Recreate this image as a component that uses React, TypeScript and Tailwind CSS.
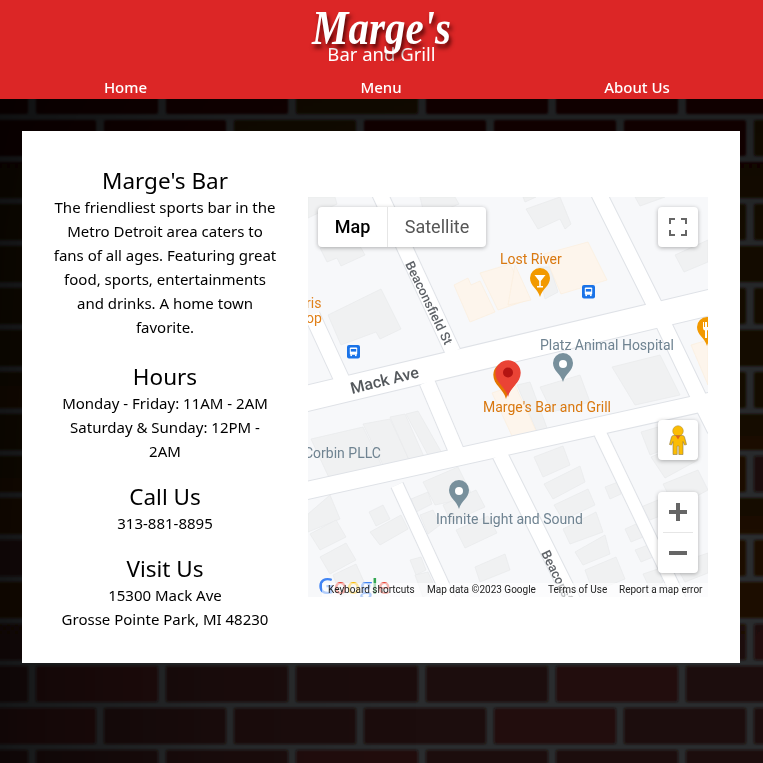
const rowsY = Array.from({ length: 17 }, (_, i) => 75 + 42 * i);

function BrickWall() {
  const bricks: { x: number; y: number; w: number; h: number; o: number }[] = [];
  rowsY.forEach((y, r) => {
    const offset = r % 2 === 0 ? 32 : 100;
    for (let i = -1; i < 7; i++) {
      const x = offset + i * 130 + 4;
      bricks.push({ x, y: y + 3, w: 122, h: 36, o: ((i * 7 + r * 3 + 10) % 4) * 0.03 });
    }
  });
  return (
    <svg className="absolute inset-0 w-full h-full" viewBox="0 0 763 763" preserveAspectRatio="none">
      <defs>
        <filter id="soft"><feGaussianBlur stdDeviation="1.2" /></filter>
        <linearGradient id="brickFill" gradientUnits="userSpaceOnUse" x1="0" y1="99" x2="0" y2="680">
          <stop offset="0" stopColor="#140705" />
          <stop offset="0.6" stopColor="#1b0b07" />
          <stop offset="1" stopColor="#210e08" />
        </linearGradient>
        <linearGradient id="horiz" x1="0" y1="0" x2="1" y2="0">
          <stop offset="0" stopColor="#000" stopOpacity="0.5" />
          <stop offset="0.03" stopColor="#000" stopOpacity="0.42" />
          <stop offset="0.3" stopColor="#000" stopOpacity="0.1" />
          <stop offset="0.55" stopColor="#000" stopOpacity="0" />
        </linearGradient>
        <linearGradient id="top" x1="0" y1="0" x2="0" y2="1">
          <stop offset="0.1" stopColor="#000" stopOpacity="0.3" />
          <stop offset="0.3" stopColor="#000" stopOpacity="0.12" />
          <stop offset="0.7" stopColor="#000" stopOpacity="0" />
        </linearGradient>
      </defs>
      <rect width="763" height="763" fill="#2a2c2e" />
      <g filter="url(#soft)">
        {bricks.map((b, i) => (
          <g key={i}>
            <rect x={b.x} y={b.y} width={b.w} height={b.h} rx="2" fill="url(#brickFill)" />
            <rect x={b.x} y={b.y} width={b.w} height={b.h} rx="2" fill="#000" opacity={b.o} />
          </g>
        ))}
      </g>
      <rect width="763" height="763" fill="url(#top)" />
      <rect width="763" height="763" fill="url(#horiz)" />
    </svg>
  );
}

const grey = [
  "308,197 335,197 337,204 308,218",
  "320,248 352,232 365,255 341,266 337,258 327,262",
  "328,315 381,289 401,329 380,339 376,332 341,345",
  "420,197 455,197 459,204 425,218",
  "526,209 560,197 571,224 565,229 560,219 538,229",
  "523,197 536,197 525,202",
  "635,197 665,197 640,206",
  "675,255 708,240 708,262 684,272",
  "538,267 550,267 558,292 545,299",
  "517,385 530,382 547,428 537,432",
  "540,387 580,375 590,402 552,412",
  "612,367 660,355 680,395 635,405",
  "311,439 363,427 384,470 331,482",
  "363,424 390,419 410,462 385,469",
  "390,417 405,414 425,459 410,462",
  "406,414 418,411 443,455 430,459",
  "308,514 330,495 340,519 308,532",
  "310,534 336,520 346,537 320,550",
  "320,557 346,543 356,560 330,574",
  "333,575 356,564 365,584 341,597",
  "369,512 383,505 390,519 376,526",
  "370,532 401,515 408,529 380,545",
  "410,560 421,557 426,570 416,575",
  "415,575 428,572 436,590 423,597",
  "411,499 428,492 432,504 416,512",
  "423,482 458,467 473,497 435,505",
  "420,515 433,510 440,525 428,534",
  "443,505 476,490 485,507 451,522",
  "456,530 488,516 497,533 465,548",
  "475,567 505,554 510,570 480,582",
  "534,457 563,446 570,465 543,477",
  "544,484 580,466 585,482 553,499",
  "554,505 588,489 595,505 563,520",
  "563,529 596,512 603,532 570,544",
  "575,552 605,535 610,554 583,565",
  "585,570 616,557 625,579 593,592",
  "605,487 618,482 621,494 610,499",
  "625,529 636,524 643,537 631,542",
  "635,550 648,545 653,557 641,562",
  "643,574 658,569 663,582 650,589",
  "641,507 658,500 665,514 650,520",
  "641,432 665,425 675,445 650,455",
  "651,457 691,440 698,460 665,478",
  "663,484 698,470 708,490 675,508",
  "675,564 708,553 708,573 685,582",
];

const tinted = [
  "454,285 468,278 471,285 480,281 495,312 470,322",
  "480,273 510,264 528,300 498,310",
  "515,265 531,300 508,305",
  "544,254 588,242 607,280 561,294",
  "492,393 515,385 537,433 513,438",
  "691,345 708,340 708,382 708,385",
];

const roads: { d: string; w: number }[] = [
  { d: "M378 190 L453 352", w: 15 },
  { d: "M427 382 L458 455", w: 15 },
  { d: "M500 455 L575 605", w: 15 },
  { d: "M312 315 L342 380", w: 15 },
  { d: "M397 485 L450 600", w: 12 },
  { d: "M597 190 L654 304 L700 400 L715 430", w: 15 },
  { d: "M600 433 L680 600", w: 12 },
  { d: "M300 400 L720 300", w: 25 },
  { d: "M300 492 L720 399", w: 17 },
];

function Pin({ x, y, color, s = 1 }: { x: number; y: number; color: string; s?: number }) {
  return (
    <g transform={`translate(${x} ${y}) scale(${s})`}>
      <path d="M0 0 C-2 -8 -10 -11 -10 -19 A10 10 0 1 1 10 -19 C10 -11 2 -8 0 0Z" fill={color} />
    </g>
  );
}

function Bus({ x, y }: { x: number; y: number }) {
  return (
    <g transform={`translate(${x} ${y})`}>
      <rect width="13" height="13.5" rx="2" fill="#1a73e8" />
      <rect x="2.8" y="2.5" width="7.4" height="7.2" rx="1" fill="#fff" />
      <rect x="3.8" y="4" width="5.4" height="2.6" fill="#1a73e8" />
      <rect x="3.4" y="9.5" width="1.6" height="1.6" fill="#fff" />
      <rect x="8" y="9.5" width="1.6" height="1.6" fill="#fff" />
    </g>
  );
}

function MapDrawing() {
  const label = "font-['Roboto'] text-[14px]";
  return (
    <svg className="block w-[400px] h-[400px]" viewBox="308 197 400 400">
      <rect x="308" y="197" width="400" height="400" fill="#f7f8fa" />
      {grey.map((p) => (
        <polygon key={p} points={p} fill="#f0f1f2" stroke="#e8e9eb" strokeWidth="0.7" />
      ))}
      {tinted.map((p) => (
        <polygon key={p} points={p} fill="#fdf5ec" stroke="#faeedd" strokeWidth="0.7" />
      ))}
      {roads.map((r) => (
        <path key={r.d + "e"} d={r.d} fill="none" stroke="#dfe2e7" strokeWidth={r.w + 2} />
      ))}
      {roads.map((r) => (
        <path key={r.d} d={r.d} fill="none" stroke="#ffffff" strokeWidth={r.w} />
      ))}

      <text x="500" y="264" fill="#d9780f" className={label}>Lost River</text>
      <text x="306" y="308" fill="#e0801a" className={label}>ris</text>
      <text x="306" y="323" fill="#e0801a" className={label}>op</text>
      <text x="540" y="349.5" fill="#6f8391" className={label}>Platz Animal Hospital</text>
      <text x="483" y="412" fill="#d9780f" className={label}>Marge's Bar and Grill</text>
      <text x="304" y="458" fill="#6f8391" className={label}>Corbin PLLC</text>
      <text x="436" y="524" fill="#6f8391" className={label}>Infinite Light and Sound</text>
      <text transform="translate(352 394) rotate(-14)" fill="#54585c" className="font-['Roboto'] font-medium text-[16px]">Mack Ave</text>
      <text transform="translate(405 264) rotate(64)" fill="#5f6368" className="font-['Roboto'] font-medium text-[13px]">Beaconsfield St</text>
      <text transform="translate(541 553) rotate(64)" fill="#5f6368" className="font-['Roboto'] font-medium text-[13px]">Beaconsfield St</text>

      <Pin x={540} y={297} color="#f29900" />
      <path d="M534.5 275 H545.5 L540.8 281 V286 H543 V287.5 H537 V286 H539.2 V281Z" fill="#fff" />
      <Pin x={563} y={382} color="#78909c" />
      <circle cx="563" cy="364" r="4" fill="#fff" />
      <Pin x={459} y={509} color="#78909c" />
      <circle cx="459" cy="491" r="4" fill="#fff" />
      <Pin x={707} y={346} color="#f29900" />
      <path d="M703 322 V328 Q703 330 705 330.5 V338 H707 V330.5 Q709 330 709 328 V322 H708 V327 H707 V322 H705 V327 H704 V322Z" fill="#fff" />
      <Bus x={582} y={285} />
      <Bus x={347} y={345} />

      <g transform="translate(506 399) scale(1.27)"><path d="M0 0 C-2 -8 -10 -11 -10 -19 A10 10 0 0 1 10 -19 C10 -11 2 -8 0 0Z" fill="#e37400" /></g>
      <g transform="translate(508 397) scale(1.27)"><path d="M0 0 C-2 -8 -10 -11 -10 -19 A10 10 0 1 1 10 -19 C10 -11 2 -8 0 0Z" fill="#ea4335" /></g>
      <circle cx="508" cy="372.5" r="5" fill="#b31412" />
    </svg>
  );
}

function Pegman() {
  return (
    <svg width="18" height="30" viewBox="0 0 18 30">
      <circle cx="9" cy="6" r="5.3" fill="#fbbc04" stroke="#a98a3a" strokeWidth="0.5" />
      <path d="M4.5 10.5 H13.5 Q15 10.5 15.5 12 L17.5 19.5 L15.5 20 L14 16.5 V29.5 H9.8 V21 H8.2 V29.5 H4 V16.5 L2.5 20 L0.5 19.5 L2.5 12 Q3 10.5 4.5 10.5Z" fill="#fbbc04" stroke="#8f7a45" strokeWidth="0.6" />
      <path d="M6.5 10.5 L9 14.5 L11.5 10.5Z" fill="#e0651b" />
    </svg>
  );
}

export default function App() {
  return (
    <div className="relative h-[763px] w-full overflow-hidden font-['Noto_Sans',sans-serif] text-black">
      <BrickWall />
      <div className="relative">
        <header className="h-[99px] bg-[#dc2626] text-white flex flex-col items-center">
          <div className="h-[44px] font-['Liberation_Serif',serif] font-bold italic text-[41px] leading-[46px] scale-y-[1.2] origin-top [text-shadow:2px_3px_4px_rgba(60,0,0,0.85)]">
            Marge's
          </div>
          <div className="h-[32px] text-[18.5px] leading-[20px]">Bar and Grill</div>
          <nav className="grid grid-cols-[251px_260px_252px] w-full text-center text-[15px] leading-[23px] font-medium">
            <span>Home</span>
            <span>Menu</span>
            <span>About Us</span>
          </nav>
        </header>
        <main className="mt-8 ml-[22px] w-[718px] h-[532px] bg-white flex items-center">
          <section className="w-[286px] pl-[22px] pr-[22px] text-center text-[15px] leading-6 whitespace-nowrap">
            <h2 className="text-[22.5px] leading-7 pt-1">Marge's Bar</h2>
            <p>
              The friendliest sports bar in the<br />
              Metro Detroit area caters to<br />
              fans of all ages. Featuring great<br />
              food, sports, entertainments<br />
              and drinks. A home town<br />
              favorite.
            </p>
            <h2 className="text-[22.5px] leading-7 pt-1 mt-5">Hours</h2>
            <p>
              Monday - Friday: 11AM - 2AM<br />
              Saturday &amp; Sunday: 12PM -<br />
              2AM
            </p>
            <h2 className="text-[22.5px] leading-7 pt-1 mt-4">Call Us</h2>
            <p>313-881-8895</p>
            <h2 className="text-[22.5px] leading-7 pt-1 mt-4">Visit Us</h2>
            <p>
              15300 Mack Ave<br />
              Grosse Pointe Park, MI 48230
            </p>
          </section>
          <div className="relative w-[400px] h-[400px] overflow-hidden font-['Roboto',sans-serif]">
            <MapDrawing />
            <div className="absolute left-[10px] top-[10px] flex h-10 bg-white rounded-sm shadow-[0_1px_4px_rgba(0,0,0,0.3)] text-[18px] leading-10">
              <span className="w-[70px] text-center font-medium text-black border-r border-[#e6e6e6]">Map</span>
              <span className="w-[98px] text-center text-[#565656]">Satellite</span>
            </div>
            <div className="absolute right-[10px] top-[10px] w-10 h-10 bg-white rounded-sm shadow-[0_1px_4px_rgba(0,0,0,0.3)] flex items-center justify-center">
              <svg width="18" height="18" viewBox="0 0 18 18" fill="none" stroke="#666" strokeWidth="2">
                <path d="M1 6 V1 H6 M12 1 H17 V6 M17 12 V17 H12 M6 17 H1 V12" />
              </svg>
            </div>
            <div className="absolute right-[10px] top-[223px] w-10 h-10 bg-white rounded-sm shadow-[0_1px_4px_rgba(0,0,0,0.3)] flex items-center justify-center">
              <Pegman />
            </div>
            <div className="absolute right-[10px] top-[295px] w-10 h-[81px] bg-white rounded-sm shadow-[0_1px_4px_rgba(0,0,0,0.3)] flex flex-col items-center">
              <div className="h-10 w-full flex items-center justify-center">
                <svg width="18" height="18" viewBox="0 0 18 18" fill="#666"><path d="M7 0 H11 V7 H18 V11 H11 V18 H7 V11 H0 V7 H7Z" /></svg>
              </div>
              <div className="h-px w-[30px] bg-[#e6e6e6]" />
              <div className="h-10 w-full flex items-center justify-center">
                <svg width="18" height="18" viewBox="0 0 18 18" fill="#666"><path d="M0 7 H18 V11 H0Z" /></svg>
              </div>
            </div>
            <div className="absolute left-[10px] bottom-0 h-[24px] text-[22px] leading-[24px] font-['Open_Sans',sans-serif] font-semibold tracking-[-0.3px]">
              <span className="text-[#4285f4]">G</span>
              <span className="text-[#ea4335]">o</span>
              <span className="text-[#fbbc05]">o</span>
              <span className="text-[#4285f4]">g</span>
              <span className="text-[#34a853]">l</span>
              <span className="text-[#ea4335]">e</span>
            </div>
            <div className="absolute right-0 bottom-0 left-[14px] h-[14px] bg-white/60 text-[10px] leading-[14px] text-[#222] flex whitespace-nowrap pl-[6px]">
              <span className="w-[99px]">Keyboard shortcuts</span>
              <span className="w-[121px]">Map data ©2023 Google</span>
              <span className="w-[71px]">Terms of Use</span>
              <span>Report a map error</span>
            </div>
          </div>
        </main>
      </div>
    </div>
  );
}
